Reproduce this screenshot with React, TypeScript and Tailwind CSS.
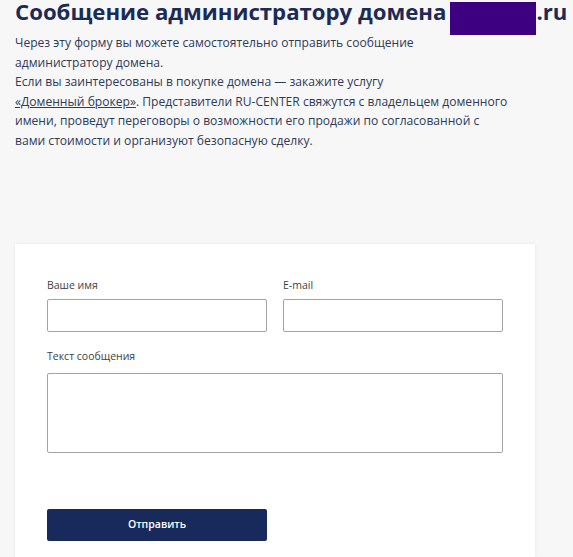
export default function App() {
  return (
    <div className="min-h-[557px] bg-[#f7f7f8] pl-[15px] pr-[4px] pt-0 font-['Open_Sans',sans-serif]">
      <h1 className="flex items-start whitespace-nowrap text-[22.2px] leading-[24px] font-bold text-[#1c2b55]">
        <span>Сообщение администратору домена</span>
        <span className="ml-[4px] mt-[2px] mb-[-11px] block h-[33px] w-[86px] shrink-0 bg-[#3d0080]" />
        <span>.ru</span>
      </h1>
      <p className="mt-[9px] text-[12.1px] leading-[19.6px] text-[#2f3b57]">
        Через эту форму вы можете самостоятельно отправить сообщение
        <br />
        администратору домена.
        <br />
        Если вы заинтересованы в покупке домена — закажите услугу
        <br />
        <a href="#" className="underline">«Доменный брокер»</a>. Представители RU-CENTER свяжутся с владельцем доменного
        <br />
        имени, проведут переговоры о возможности его продажи по согласованной с
        <br />
        вами стоимости и организуют безопасную сделку.
      </p>

      <div className="mt-[93px] w-[520px] bg-white px-[32px] pt-[34px] pb-[16px] shadow-[0_0_3px_rgba(0,0,0,0.08)]">
        <div className="grid grid-cols-2 gap-x-[16px]">
          <label className="block">
            <span className="block text-[10.5px] leading-[15px] text-[#3c3f45]">Ваше имя</span>
            <input type="text" className="mt-[6px] block h-[33px] w-full rounded-[2px] border border-[#a3a3a3] bg-white outline-none" />
          </label>
          <label className="block">
            <span className="block text-[10.5px] leading-[15px] text-[#3c3f45]">E-mail</span>
            <input type="email" className="mt-[6px] block h-[33px] w-full rounded-[2px] border border-[#a3a3a3] bg-white outline-none" />
          </label>
        </div>
        <label className="mt-[17px] block">
          <span className="block text-[10.5px] leading-[15px] text-[#3c3f45]">Текст сообщения</span>
          <textarea className="mt-[9px] block h-[80px] w-full resize-none rounded-[2px] border border-[#a3a3a3] bg-white outline-none" />
        </label>
        <button type="button" className="mt-[56px] h-[32px] w-[220px] rounded-[2px] bg-[#172a5b] text-[10.5px] font-semibold text-white">
          Отправить
        </button>
      </div>
    </div>
  )
}
